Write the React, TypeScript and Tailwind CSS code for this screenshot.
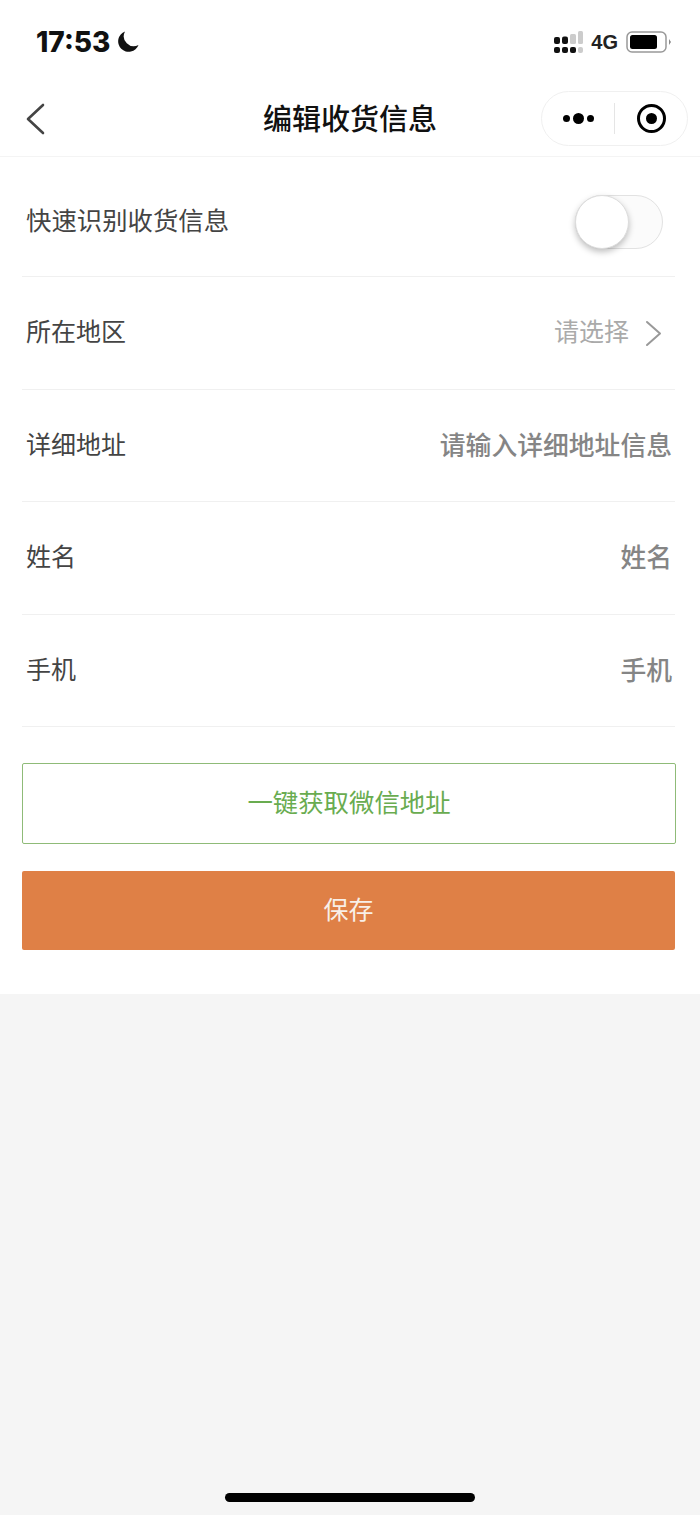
import React from 'react';

const cjk = 'font-["Noto_Sans_CJK_SC","Noto_Sans",sans-serif]';

function SignalIcon() {
  return (
    <svg width="29" height="23" viewBox="0 0 29 23">
      <rect x="0" y="6" width="6" height="7" rx="2" fill="#111" />
      <rect x="8" y="5.5" width="6" height="7.5" rx="2" fill="#111" />
      <rect x="16" y="3" width="6" height="10" rx="1.5" fill="#ccc" />
      <rect x="24" y="0" width="5" height="13" rx="1.5" fill="#ccc" />
      <rect x="0" y="16" width="6" height="6" rx="2" fill="#111" />
      <rect x="8" y="16" width="6" height="6" rx="2" fill="#111" />
      <rect x="16" y="16" width="6" height="6" rx="2" fill="#111" />
      <rect x="24" y="16" width="5" height="6" rx="2" fill="#ccc" />
    </svg>
  );
}

function BatteryIcon() {
  return (
    <svg width="46" height="22" viewBox="0 0 46 22">
      <rect x="1" y="1" width="39" height="20" rx="5" fill="none" stroke="#999" strokeWidth="1.5" />
      <rect x="4" y="4" width="27" height="14" rx="2.5" fill="#000" />
      <path d="M43 8 L45 11 L43 14 Z" fill="#888" />
    </svg>
  );
}

function Row({ label, right, className = 'h-[112.5px] pb-[4px]', labelClass = 'text-[25px]' }: { label: string; right: React.ReactNode; className?: string; labelClass?: string }) {
  return (
    <div className={`${className} ml-[22px] mr-[25px] flex items-center justify-between border-b border-[#f0f0f0]`}>
      <span className={`${labelClass} pl-[4px] text-[#444]`}>{label}</span>
      {right}
    </div>
  );
}

export default function App() {
  return (
    <div className={`h-[1515px] w-[700px] bg-[#f5f5f5] ${cjk}`}>
      <div className="bg-white h-[994px]">
        {/* Status bar */}
        <div className="flex h-[84px] items-center justify-between pl-[36px] pr-[28px]">
          <div className="flex items-center gap-[7px]">
            <span className="font-['Inter',sans-serif] text-[28px] font-extrabold leading-none text-[#111]">17:53</span>
            <svg width="22" height="22" viewBox="0 0 22 22">
              <path d="M8 0.5 A10.5 10.5 0 1 0 21.5 14 A10 10 0 0 1 8 0.5 Z" fill="#111" />
            </svg>
          </div>
          <div className="flex items-center gap-[8px]">
            <SignalIcon />
            <span className="font-['Liberation_Sans',sans-serif] text-[20px] font-bold text-[#222]">4G</span>
            <BatteryIcon />
          </div>
        </div>

        {/* Nav bar */}
        <div className="relative flex h-[73px] items-center justify-center border-b border-[#f4f4f4] pb-[4px]">
          <svg className="absolute left-[25px] top-[19px]" width="22" height="32" viewBox="0 0 22 32">
            <path d="M18 2 L3 16 L18 30" fill="none" stroke="#444" strokeWidth="2.6" strokeLinecap="round" strokeLinejoin="round" />
          </svg>
          <span className="text-[29px] font-medium text-[#111]">编辑收货信息</span>
          <div className="absolute left-[541px] top-[7px] flex h-[55px] w-[147px] items-center rounded-full border border-[#f0f0f0] bg-white">
            <div className="flex flex-1 items-center justify-center gap-[3px] pl-[1px]">
              <span className="h-[7px] w-[7px] rounded-full bg-black" />
              <span className="h-[11px] w-[11px] rounded-full bg-black" />
              <span className="h-[7px] w-[7px] rounded-full bg-black" />
            </div>
            <div className="h-[31px] w-px bg-[#e5e5e5]" />
            <div className="flex w-[72px] items-center justify-center">
              <div className="flex h-[29px] w-[29px] items-center justify-center rounded-full border-[3px] border-black">
                <span className="h-[11px] w-[11px] rounded-full bg-black" />
              </div>
            </div>
          </div>
        </div>

        {/* Form */}
        <Row
          label="快速识别收货信息"
          className="h-[120px] pt-[6px]"
          labelClass="text-[25.4px]"
          right={
            <div className="relative mr-[12px] mt-[4px] h-[54px] w-[88px] rounded-full border border-[#e2e2e2] bg-[#fbfbfb]">
              <div className="absolute -left-px -top-px h-[54px] w-[54px] rounded-full border border-[#ddd] bg-white shadow-[0_3px_6px_rgba(0,0,0,0.25)]" />
            </div>
          }
        />
        <Row
          label="所在地区"
          right={
            <div className="mr-[13px] flex items-center gap-[16px]">
              <span className="text-[25px] text-[#aaa]">请选择</span>
              <svg className="mt-[6px]" width="17" height="27" viewBox="0 0 17 27">
                <path d="M2 2 L15 13.5 L2 25" fill="none" stroke="#999" strokeWidth="2" strokeLinecap="round" strokeLinejoin="round" />
              </svg>
            </div>
          }
        />
        {[
          ['详细地址', '请输入详细地址信息'],
          ['姓名', '姓名'],
          ['手机', '手机'],
        ].map(([label, hint]) => (
          <Row
            key={label}
            label={label}
            right={<span className="mr-[3px] mt-[2px] text-[25.8px] font-medium text-[#858585]">{hint}</span>}
          />
        ))}

        {/* Buttons */}
        <div className="ml-[22px] mr-[24px] mt-[36px] flex h-[81px] items-center justify-center rounded-[2px] border border-[#8fbb78] pb-[4px] text-[25.4px] text-[#69ac50]">
          一键获取微信地址
        </div>
        <div className="ml-[22px] mr-[25px] mt-[27px] flex h-[79px] items-center justify-center rounded-[2px] bg-[#df8046] pb-[4px] text-[25px] text-[#f8efe8]">
          保存
        </div>
      </div>

      {/* Home indicator */}
      <div className="flex justify-center pt-[499px]">
        <div className="h-[9px] w-[250px] rounded-full bg-black" />
      </div>
    </div>
  );
}
